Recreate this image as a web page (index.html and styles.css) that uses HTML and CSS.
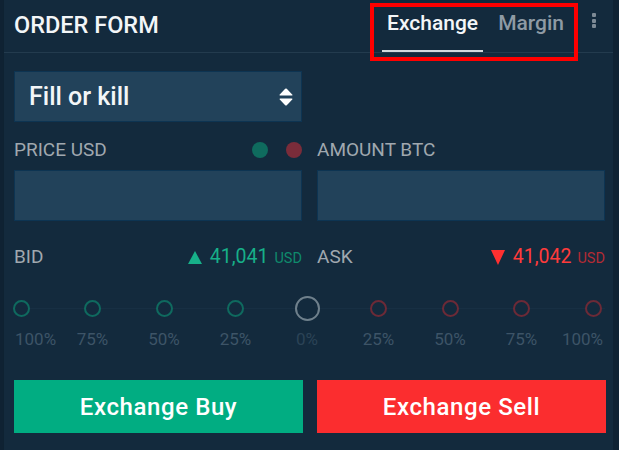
FILE: index.html
```html
<!DOCTYPE html>
<html>
<head>
<meta charset="utf-8">
<link rel="stylesheet" href="styles.css">
</head>
<body>
<div class="panel">
  <div class="header">
    <div class="title">ORDER FORM</div>
    <div class="tabs">
      <div class="tab active">Exchange</div>
      <div class="tab">Margin</div>
    </div>
    <div class="kebab"><span></span><span></span><span></span></div>
    <div class="highlight"></div>
  </div>
  <div class="content">
    <div class="select">
      <span class="select-text">Fill or kill</span>
      <svg class="select-arrows" width="14" height="18" viewBox="0 0 14 18"><path d="M6.2 0.8 Q7 0 7.8 0.8 L13.2 6.4 Q14 7.6 12.6 7.6 H1.4 Q0 7.6 0.8 6.4 Z" fill="#ffffff"/><path d="M6.2 17.2 Q7 18 7.8 17.2 L13.2 11.6 Q14 10.4 12.6 10.4 H1.4 Q0 10.4 0.8 11.6 Z" fill="#ffffff"/></svg>
    </div>
    <div class="grid">
      <div class="col">
        <div class="label-row">
          <span class="label">PRICE USD</span>
          <span class="dots"><span class="dot green"></span><span class="dot red"></span></span>
        </div>
        <div class="input"></div>
        <div class="quote-row">
          <span class="label">BID</span>
          <span class="quote buy"><span class="tri up"></span><span class="num">41,041</span><span class="cur">USD</span></span>
        </div>
      </div>
      <div class="col">
        <div class="label-row">
          <span class="label">AMOUNT BTC</span>
        </div>
        <div class="input"></div>
        <div class="quote-row">
          <span class="label">ASK</span>
          <span class="quote sell"><span class="tri down"></span><span class="num">41,042</span><span class="cur">USD</span></span>
        </div>
      </div>
    </div>
    <div class="slider">
      <div class="tick g"><span class="circle"></span><span class="pct">100%</span></div>
      <div class="tick g"><span class="circle"></span><span class="pct">75%</span></div>
      <div class="tick g"><span class="circle"></span><span class="pct">50%</span></div>
      <div class="tick g"><span class="circle"></span><span class="pct">25%</span></div>
      <div class="tick zero"><span class="circle"></span><span class="pct">0%</span></div>
      <div class="tick r"><span class="circle"></span><span class="pct">25%</span></div>
      <div class="tick r"><span class="circle"></span><span class="pct">50%</span></div>
      <div class="tick r"><span class="circle"></span><span class="pct">75%</span></div>
      <div class="tick r"><span class="circle"></span><span class="pct">100%</span></div>
    </div>
    <div class="buttons">
      <div class="btn buy-btn">Exchange Buy</div>
      <div class="btn sell-btn">Exchange Sell</div>
    </div>
  </div>
</div>
</body>
</html>
```
FILE: styles.css
```css
* { box-sizing: border-box; }
html, body {
  margin: 0;
  padding: 0;
  background: #0f2233;
  height: 450px;
  overflow: hidden;
  font-family: Roboto, "Liberation Sans", sans-serif;
}
.panel {
  margin-left: 3px;
  width: 610px;
  height: 450px;
  background: #132a3d;
  border-left: 1px solid #0e2232;
}
.header {
  position: relative;
  height: 53px;
  display: flex;
  align-items: flex-start;
  padding: 0 17px 0 10px;
  border-bottom: 1px solid #233b4e;
}
.title {
  color: #f3f6f8;
  font-size: 23.5px;
  font-weight: 500;
  line-height: 26px;
  padding-top: 12px;
  flex: 1;
}
.tabs {
  display: flex;
  gap: 10px;
}
.tab {
  height: 52px;
  padding: 10px 5px 0;
  font-size: 21px;
  font-weight: 500;
  line-height: 26px;
  color: #8e9aa4;
  border-bottom: 2px solid transparent;
}
.tab.active {
  color: #f3f6f8;
  border-bottom-color: #d3d9de;
}
.kebab {
  margin-left: 23px;
  margin-top: 13px;
  display: flex;
  flex-direction: column;
  gap: 1.5px;
}
.kebab span {
  width: 4px;
  height: 4px;
  border-radius: 1px;
  background: #7d8a95;
}
.highlight {
  position: absolute;
  left: 366px;
  top: 3px;
  width: 208px;
  height: 58px;
  border: 4px solid #ff0000;
}
.content {
  padding: 18px 8px 0 10px;
}
.select {
  height: 51px;
  background: #22425a;
  border: 1px solid #0d3452;
  display: flex;
  align-items: center;
  justify-content: space-between;
  padding: 0 8px 0 14px;
  width: 288px;
}
.select-text {
  color: #f3f6f8;
  font-size: 25px;
  font-weight: 500;
}
.grid {
  display: grid;
  grid-template-columns: 288px 288px;
  gap: 15px;
}
.label-row {
  margin-top: 17px;
  height: 22px;
  display: flex;
  align-items: center;
  justify-content: space-between;
}
.label {
  color: #a0a8af;
  font-size: 19px;
  line-height: 22px;
}
.dots {
  display: flex;
  gap: 18px;
}
.dot {
  width: 16px;
  height: 16px;
  border-radius: 50%;
}
.dot.green { background: #0f6b5e; }
.dot.red { background: #7a2c3a; }
.input {
  margin-top: 9px;
  height: 51px;
  background: #22425a;
  border: 1px solid #0d3452;
}
.quote-row {
  margin-top: 25px;
  height: 22px;
  display: flex;
  align-items: center;
  justify-content: space-between;
}
.quote {
  display: flex;
  align-items: center;
  line-height: 22px;
}
.num {
  font-size: 19.5px;
  margin-left: 8px;
}
.cur {
  font-size: 14.5px;
  margin-left: 6px;
  padding-top: 3px;
}
.buy .num { color: #17b089; }
.buy .cur { color: #0f8a6c; }
.sell .num { color: #ff3b3b; }
.sell .cur { color: #b42b34; }
.tri {
  width: 0;
  height: 0;
  border-left: 7.5px solid transparent;
  border-right: 7.5px solid transparent;
}
.tri.up { border-bottom: 13px solid #17b089; }
.tri.down { border-top: 15px solid #ff3030; }
.slider {
  margin-top: 28px;
  padding: 0 12px 0 7px;
  display: flex;
  justify-content: space-between;
  width: 591px;
  background: linear-gradient(#172f43, #172f43) 0 12px / 100% 1px no-repeat;
}
.tick {
  width: 0;
  display: flex;
  flex-direction: column;
  align-items: center;
}
.circle {
  flex: none;
  width: 17px;
  height: 17px;
  border-radius: 50%;
  border: 2px solid #0f6a5f;
  background: #132a3d;
  margin: 4px 0;
}
.tick.r .circle { border-color: #6c2a37; }
.tick.zero .circle {
  width: 25px;
  height: 25px;
  margin: 0;
  border-color: #6f808c;
}
.pct {
  margin-top: 8px;
  color: #3d5467;
  font-size: 17px;
  line-height: 20px;
  white-space: nowrap;
}
.tick.zero .pct { color: #2b4356; }
.tick:first-child .pct { align-self: flex-start; margin-left: -6px; }
.tick:last-child .pct { align-self: flex-end; margin-right: -10px; }
.buttons {
  margin-top: 31px;
  display: grid;
  grid-template-columns: 289px 289px;
  gap: 14px;
}
.btn {
  height: 53px;
  display: flex;
  align-items: center;
  justify-content: center;
  color: #ffffff;
  font-size: 24px;
  font-weight: 500;
  letter-spacing: 0.6px;
}
.buy-btn { background: #01ad82; }
.sell-btn { background: #fb2d2f; }
```
